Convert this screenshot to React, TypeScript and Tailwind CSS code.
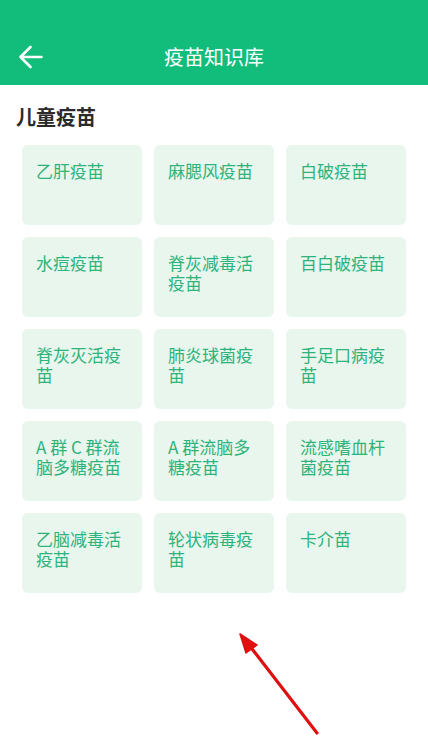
import React from "react";

const items = [
  "乙肝疫苗",
  "麻腮风疫苗",
  "白破疫苗",
  "水痘疫苗",
  "脊灰减毒活疫苗",
  "百白破疫苗",
  "脊灰灭活疫苗",
  "肺炎球菌疫苗",
  "手足口病疫苗",
  "A 群 C 群流脑多糖疫苗",
  "A 群流脑多糖疫苗",
  "流感嗜血杆菌疫苗",
  "乙脑减毒活疫苗",
  "轮状病毒疫苗",
  "卡介苗",
];

export default function App() {
  return (
    <div
      className="relative w-[428px] h-[750px] bg-white overflow-hidden"
      style={{ fontFamily: '"Noto Sans CJK SC", "Noto Sans", sans-serif' }}
    >
      <header className="h-[85px] bg-[#12bd7c] flex items-end pb-[6px] relative">
        <div className="w-full h-[44px] flex items-center relative">
          <svg width="26" height="26" viewBox="0 0 26 26" className="ml-[17px]" fill="none">
            <path d="M3.5 13 H24.5 M13.5 3 L3.5 13 L13.5 23" stroke="white" strokeWidth="2.6" strokeLinecap="round" strokeLinejoin="round" />
          </svg>
          <div className="absolute inset-0 flex items-center justify-center text-white text-[20px]">
            疫苗知识库
          </div>
        </div>
      </header>
      <div className="px-[16px] pt-[18px] text-[20px] font-bold text-[#2b2b2b] leading-[28px]">儿童疫苗</div>
      <div className="grid grid-cols-[120px_120px_120px] gap-[12px] pl-[22px] pt-[14px]">
        {items.map((t) => (
          <div key={t} className="h-[80px] rounded-[6px] bg-[#e8f6ee] px-[14px] pt-[16px] text-[17px] leading-[20px] text-[#2db37b] break-all">
            {t}
          </div>
        ))}
      </div>
      <svg className="absolute left-0 top-0 pointer-events-none" width="428" height="750" viewBox="0 0 428 750">
        <line x1="317" y1="733" x2="249" y2="645" stroke="#e01010" strokeWidth="3.2" strokeLinecap="round" />
        <polygon points="240,634 257,645 246,653" fill="#e01010" stroke="#e01010" strokeWidth="1.5" strokeLinejoin="round" />
      </svg>
    </div>
  );
}
